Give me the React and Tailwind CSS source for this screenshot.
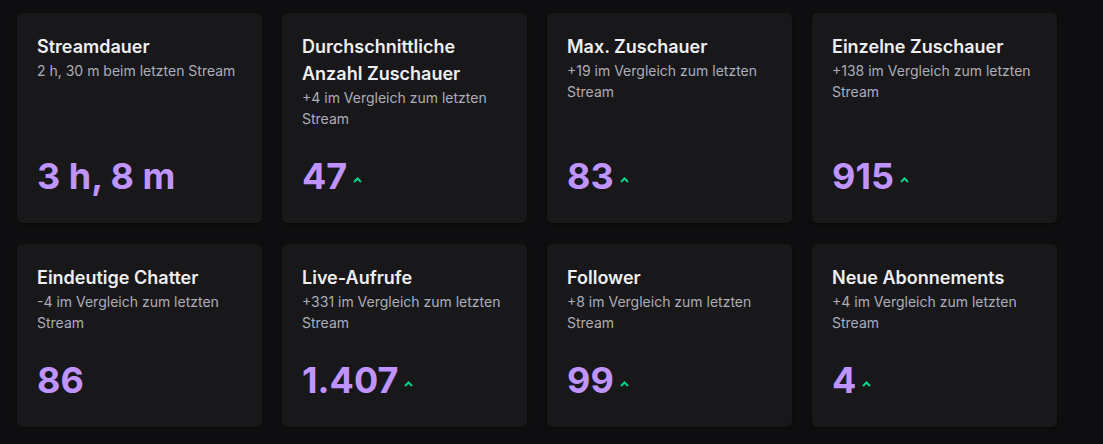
const stats = [
  { title: "Streamdauer", sub: "2 h, 30 m beim letzten Stream", value: "3 h, 8 m", up: false },
  { title: "Durchschnittliche Anzahl Zuschauer", sub: "+4 im Vergleich zum letzten Stream", value: "47", up: true },
  { title: "Max. Zuschauer", sub: "+19 im Vergleich zum letzten Stream", value: "83", up: true },
  { title: "Einzelne Zuschauer", sub: "+138 im Vergleich zum letzten Stream", value: "915", up: true },
  { title: "Eindeutige Chatter", sub: "-4 im Vergleich zum letzten Stream", value: "86", up: false },
  { title: "Live-Aufrufe", sub: "+331 im Vergleich zum letzten Stream", value: "1.407", up: true },
  { title: "Follower", sub: "+8 im Vergleich zum letzten Stream", value: "99", up: true },
  { title: "Neue Abonnements", sub: "+4 im Vergleich zum letzten Stream", value: "4", up: true },
];

const UpArrow = () => (
  <svg width="9" height="6" viewBox="0 0 9 6" className="ml-[6px] mb-[20px]">
    <path d="M1 5 L4.5 1.5 L8 5" fill="none" stroke="#00d68a" strokeWidth="2" />
  </svg>
);

const StatCard = ({ stat }) => {
  return (
    <div className="flex flex-col bg-[#18181b] rounded-[5px] shadow-[0_1px_3px_rgba(0,0,0,0.5)] px-5 pt-5 pb-5">
      <h3 className="text-[18px] leading-[27px] font-semibold text-[#efeff1]">{stat.title}</h3>
      <p className="text-[14px] leading-[21px] text-[#adadb8]">{stat.sub}</p>
      <div className="mt-auto pt-5 flex items-end">
        <span className="text-[36px] leading-[54px] font-bold text-[#bf94ff]">{stat.value}</span>
        {stat.up && <UpArrow />}
      </div>
    </div>
  );
};

const App = () => {
  return (
    <div
      className="w-[1103px] h-[444px] bg-[#0e0e10] pl-[17px] pt-[13px]"
      style={{ fontFamily: "Inter, 'Noto Sans', sans-serif" }}
    >
      <div className="grid grid-cols-[repeat(4,245px)] gap-x-5 gap-y-[21px]">
        {stats.map((s) => (
          <StatCard key={s.title} stat={s} />
        ))}
      </div>
    </div>
  );
};

export default App;
